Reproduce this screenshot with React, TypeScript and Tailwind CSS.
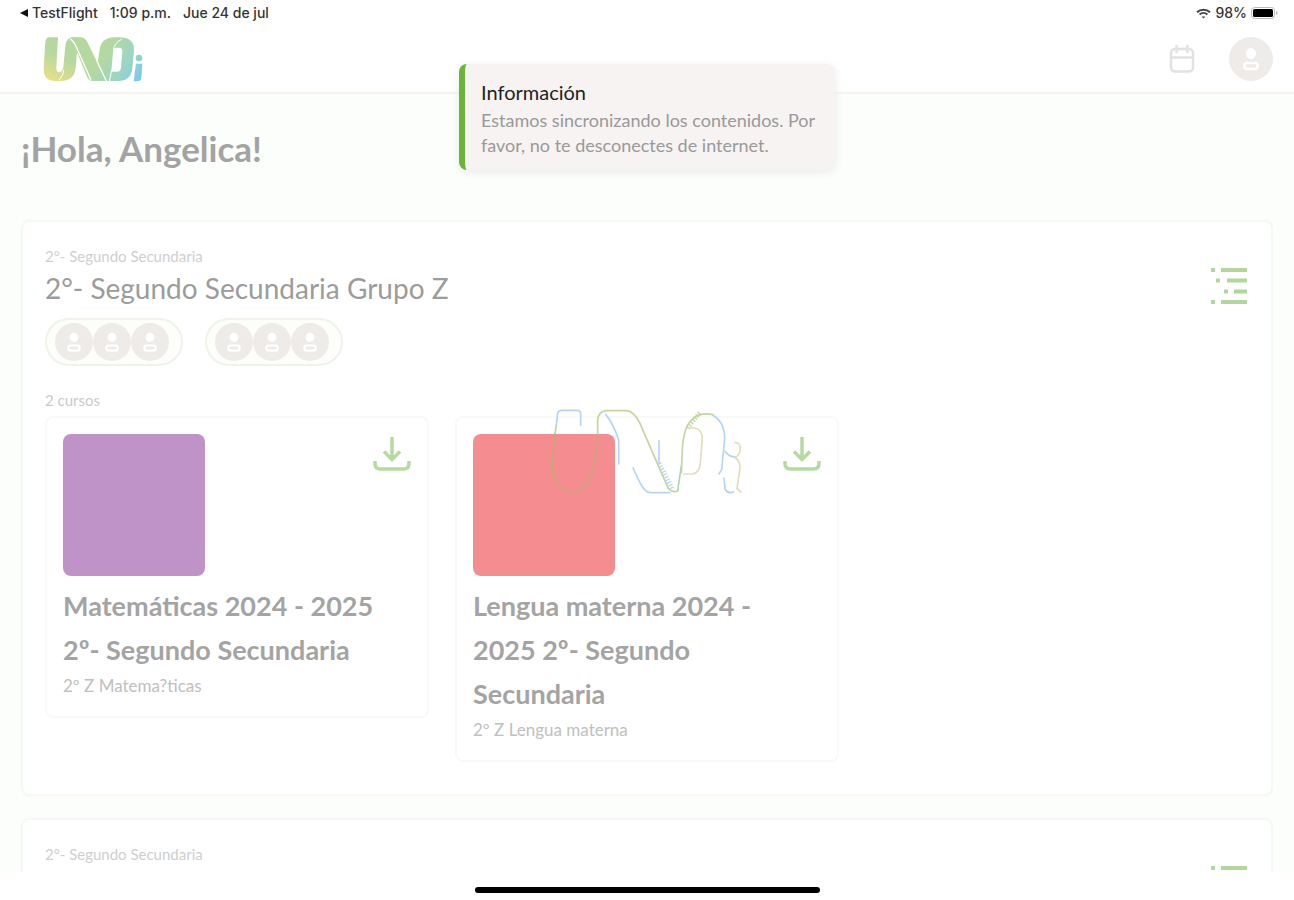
import type { ReactNode } from "react";

const courses = [
  {
    title: "Matemáticas 2024 - 2025 2º- Segundo Secundaria",
    group: "2º Z Matema?ticas",
    cover: "bg-[#bf93c7]",
  },
  {
    title: "Lengua materna 2024 - 2025 2º- Segundo Secundaria",
    group: "2º Z Lengua materna",
    cover: "bg-[#f58d90]",
  },
];

function StatusBar() {
  return (
    <div className="flex h-[26px] shrink-0 items-center justify-between pr-4 pl-5 font-['Inter',sans-serif] text-sm font-medium text-[#333]">
      <div className="flex items-center gap-3">
        <span className="flex items-center gap-1">
          <svg width="8" height="8" viewBox="0 0 8 8" fill="#111">
            <path d="M0 4 8 0v8z" />
          </svg>
          TestFlight
        </span>
        <span>1:09 p.m.</span>
        <span>Jue 24 de jul</span>
      </div>
      <div className="flex items-center gap-1">
        <svg width="15" height="11" viewBox="0 0 15 11" fill="none" stroke="#444" strokeWidth="2">
          <path d="M1 4.2C4.500 .8 10.500 .8 14 4.200M3.600 6.600c2.200-2 5.600-2 7.800 0" />
          <path d="M7.500 10.500 5.600 8.500h3.800z" fill="#444" stroke="none" />
        </svg>
        <span>98%</span>
        <svg width="27" height="12" viewBox="0 0 27 12">
          <rect x=".5" y=".5" width="23" height="11" rx="3" fill="#fff" stroke="#bbb" />
          <rect x="2" y="2" width="20" height="8" rx="1.500" fill="#000" />
          <path d="M25 4v4c1-.4 1.600-1.100 1.600-2S26 4.400 25 4z" fill="#bbb" />
        </svg>
      </div>
    </div>
  );
}

function Logo() {
  return (
    <svg width="100" height="45" viewBox="0 0 300 133" role="img" aria-label="UNOi">
      <defs>
        <linearGradient id="uno" gradientUnits="userSpaceOnUse" x1="5" y1="140" x2="45" y2="50">
          <stop offset="0" stopColor="#f3e283" />
          <stop offset=".5" stopColor="#d2dd92" />
          <stop offset="1" stopColor="#b5d8a1" />
        </linearGradient>
        <linearGradient id="uno-end" gradientUnits="userSpaceOnUse" x1="190" y1="40" x2="300" y2="115">
          <stop offset="0" stopColor="#b5d8a1" />
          <stop offset=".55" stopColor="#9bd5c5" />
          <stop offset="1" stopColor="#7cc9ef" />
        </linearGradient>
      </defs>
      <path
        d="M20 0H45L40 90Q39 105 48 105Q58 105 61 90L67 25Q70 0 92 0H106L98 92Q94 131 52 131H38Q0 131 2 92L7 14Q8 0 20 0Z"
        fill="url(#uno)"
      />
      <g fill="url(#uno-end)">
        <path d="M84 0H112Q126 0 133 14L164 78L170 35Q176 0 216 0H228Q275 0 273 40L268 92Q264 131 226 131H150Q138 131 132 118Z" />
        <circle cx="288" cy="62" r="10" />
        <path d="M279 79H298L295 122Q294 132 284 132H272Z" />
      </g>
      <path d="M220 31H228Q239 31 238 43L234 91Q233 103 222 103H205L210 43Q211 31 220 31Z" fill="#fff" />
      <g fill="none" stroke="#fff" strokeWidth="4">
        <path d="M82 4Q96 16 104 38L144 128" />
        <path d="M162 72 190 131" />
        <path d="M62 98Q62 114 48 128" strokeWidth="3" />
        <path d="M199 131 206 98M211 38Q214 16 236 6" strokeWidth="3" />
      </g>
    </svg>
  );
}

function Avatar({ className }: { className: string }) {
  return (
    <svg className={className} viewBox="0 0 44 44">
      <circle cx="22" cy="22" r="22" fill="#eeebe9" />
      <path d="M22 11c3 0 5 2.500 5 5.500S25 22 22 22s-5-2.500-5-5.500 2-5.500 5-5.500z" fill="#fff" />
      <rect x="15.500" y="26" width="13" height="6" rx="2.500" fill="none" stroke="#fff" strokeWidth="2.500" />
    </svg>
  );
}

function AvatarGroup() {
  return (
    <div className="flex h-12 w-[138px] items-center rounded-full border-2 border-[#edf4e8] bg-[#fdfefc] pl-2">
      <Avatar className="size-[38px]" />
      <Avatar className="size-[38px]" />
      <Avatar className="size-[38px]" />
    </div>
  );
}

function CalendarIcon() {
  return (
    <svg width="26" height="30" viewBox="0 0 26 30" fill="none" stroke="#e2e2e2" strokeWidth="2.500" strokeLinecap="round">
      <rect x="2" y="5" width="22" height="22.500" rx="4" />
      <path d="M2 13.500h22M7.500 2v6M18.500 2v6M10 5h6" />
    </svg>
  );
}

function ListIcon() {
  return (
    <svg width="36" height="36" viewBox="0 0 36 36" fill="#b2d79c">
      <path d="M0 0h4v4H0zM10 0h26v4H10zM5 10.500h4v4H5zM16 10.500h20v4H16zM13 21.500h4v4h-4zM23 21.500h13v4H23zM0 32h4v4H0zM10 32h26v4H10z" />
    </svg>
  );
}

function DownloadIcon() {
  return (
    <svg width="38" height="35" viewBox="0 0 38 35" fill="none" stroke="#b5dba2" strokeWidth="3.500">
      <path d="M19 1v22M11 15.500l8 8 8-8" />
      <path d="M2 25v2.500Q2 33 7.500 33h23Q36 33 36 27.500V25" />
    </svg>
  );
}

function GroupCard({ title, children }: { title?: string; children?: ReactNode }) {
  return (
    <section className="rounded-lg border-2 border-[#f6f8f3] bg-white px-[22px] pt-[22px] pb-8">
      <div className="flex items-start justify-between">
        <div>
          <p className="text-[15px] leading-6 text-[#cfcfcf]">2º- Segundo Secundaria</p>
          {title && <h2 className="text-[28px] leading-10 text-[#9c9c9c]">{title}</h2>}
        </div>
        <button type="button" aria-label="Ver lista" className="mt-6 mr-0.5">
          <ListIcon />
        </button>
      </div>
      {children}
    </section>
  );
}

function CourseCard({ title, group, cover }: { title: string; group: string; cover: string }) {
  return (
    <article className="rounded-lg border-2 border-[#f8faf6] px-4 pt-4 pb-4">
      <div className="flex items-start justify-between">
        <div className={`size-[142px] rounded-lg ${cover}`} />
        <button type="button" aria-label="Descargar" className="mt-0.5">
          <DownloadIcon />
        </button>
      </div>
      <h3 className="mt-2 pr-4 text-[27px] leading-[44px] font-bold text-[#a4a4a4]">{title}</h3>
      <p className="text-[17px] leading-7 text-[#c0c0c0]">{group}</p>
    </article>
  );
}

function Toast() {
  return (
    <div
      role="status"
      className="absolute top-16 left-1/2 w-[376px] -translate-x-1/2 overflow-hidden rounded-lg border-l-[6px] border-[#6cb33a] bg-[#f7f3f2] pt-4 pr-4 pb-3 pl-4 shadow-[0_2px_10px_rgba(0,0,0,0.08)]"
    >
      <p className="text-xl leading-6 text-[#222]">Información</p>
      <p className="mt-1 text-lg leading-[25px] text-[#999]">
        Estamos sincronizando los contenidos. Por favor, no te desconectes de internet.
      </p>
    </div>
  );
}

// Outline of the logo, drawn over the page while it syncs
function LoadingMark() {
  return (
    <div className="pointer-events-none absolute inset-0 flex items-center justify-center pt-1">
      <svg width="192" height="88" viewBox="64 56 576 264" fill="none" strokeWidth="5" strokeLinecap="round">
        <g stroke="#b4d5f8">
          <path d="M80 108 84 72Q86 63 96 63H142Q153 63 153 74V108" />
          <path d="M228 76Q250 100 267 152V224" />
          <path d="M388 154V222" />
          <path d="M310 236 328 274Q344 310 362 310H420" />
          <path d="M388 222 430 302" strokeDasharray="4 5" strokeWidth="14" strokeLinecap="butt" />
          <path d="M550 78Q586 100 585 150L576 240 568 254" />
          <path d="M586 186Q600 206 620 202M583 266 586 298Q592 314 612 308" />
        </g>
        <g stroke="#c6d5a0">
          <path d="M80 108 76 134" />
          <path d="M76 134 67 225Q74 302 128 308Q180 304 193 220L204 160V134" stroke="#c9a57a" />
          <path d="M204 134V92Q206 68 228 64H292Q312 66 330 100L382 220 416 298Q430 312 444 304" />
          <path d="M455 250 458 180Q462 116 484 94Q506 66 550 76" stroke="#c0d8a4" />
          <path d="M474 116 510 70" strokeDasharray="4 5" strokeWidth="14" strokeLinecap="butt" />
        </g>
        <path d="M444 304 455 230" stroke="#b2d4b2" />
        <g stroke="#e2deba">
          <path d="M476 116H496Q518 122 518 148L512 220Q510 252 488 254H462" />
          <path d="M616 160Q634 160 632 182Q630 200 614 204Q632 214 631 236L622 298 634 308" />
        </g>
      </svg>
    </div>
  );
}

export default function App() {
  return (
    <div className="relative flex h-screen flex-col overflow-hidden bg-white font-['Lato',sans-serif]">
      <StatusBar />
      <header className="flex h-[68px] shrink-0 items-center justify-between border-b-2 border-[#f3f5ee] pr-[21px] pl-[43px]">
        <a href="#inicio">
          <Logo />
        </a>
        <div className="flex items-center gap-[34px]">
          <button type="button" aria-label="Calendario">
            <CalendarIcon />
          </button>
          <button type="button" aria-label="Perfil">
            <Avatar className="size-11" />
          </button>
        </div>
      </header>

      <main className="min-h-0 flex-1 overflow-hidden bg-[#fbfefa] px-[21px]">
        <h1 className="pt-8 text-[35px] leading-[44px] font-bold text-[#a3a3a3]">¡Hola, Angelica!</h1>
        <div className="mt-[50px] flex flex-col gap-[22px]">
          <GroupCard title="2°- Segundo Secundaria Grupo Z">
            <div className="mt-2.5 flex gap-[22px]">
              <AvatarGroup />
              <AvatarGroup />
            </div>
            <p className="mt-[22px] text-[15px] leading-6 text-[#cbcbcb]">2 cursos</p>
            <div className="mt-1 grid grid-cols-3 items-start gap-[26px]">
              {courses.map((course) => (
                <CourseCard key={course.title} {...course} />
              ))}
            </div>
          </GroupCard>
          <GroupCard />
        </div>
      </main>

      <footer className="flex h-7 shrink-0 items-center justify-center pt-2">
        <div className="h-1.5 w-[345px] rounded-full bg-black" />
      </footer>

      <LoadingMark />
      <Toast />
    </div>
  );
}
